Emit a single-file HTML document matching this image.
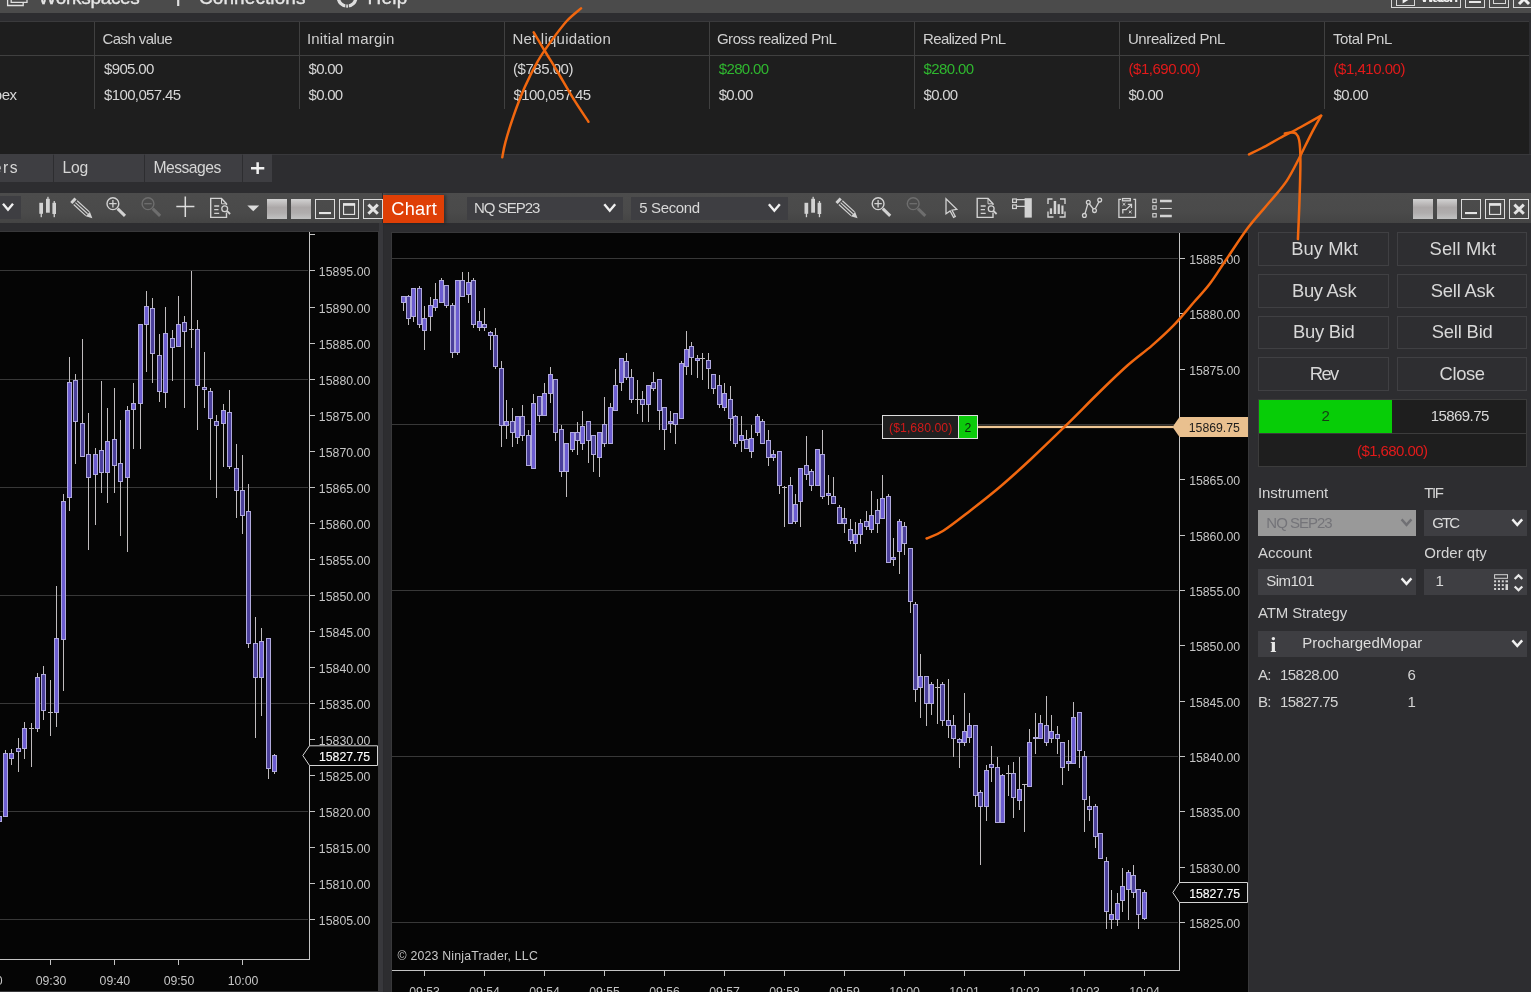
<!DOCTYPE html>
<html><head><meta charset="utf-8"><title>NinjaTrader</title>
<style>
html,body{margin:0;padding:0;background:#2d2d30;}
body{width:1531px;height:992px;position:relative;overflow:hidden;font-family:"Liberation Sans",sans-serif;}
.t{position:absolute;white-space:nowrap;line-height:1;}
.r{position:absolute;}
svg{position:absolute;left:0;top:0;overflow:visible;}
#app{position:absolute;left:0;top:0;width:1531px;height:992px;overflow:hidden;will-change:transform;}
</style></head><body><div id="app">
<div class="r" style="left:0px;top:0px;width:1531px;height:12.5px;background:#4b4b4b;"></div>
<svg width="1531" height="24" viewBox="0 0 1531 24"><g fill="none" stroke="#e0e0e0" stroke-width="1.3"><path d="M7.6 -6V5.5H23.2V2.4"/><path d="M11.2 -6V2.3H27V-6"/><path d="M178.2 -6V6" stroke-width="2.2"/><circle cx="347.1" cy="-2.64" r="8.8" stroke-width="3.3" stroke="#dedede"/><path d="M345.95 3L345.6 9M348.25 3L348.6 9" stroke="#4b4b4b" stroke-width="0.9"/></g></svg>
<div class="t" style="left:38.50px;top:-11.98px;font-size:19.00px;color:#e6e6e6;letter-spacing:-0.319px;-webkit-text-stroke:0.35px #e6e6e6;">Workspaces</div>
<div class="t" style="left:199.00px;top:-11.98px;font-size:19.00px;color:#e6e6e6;letter-spacing:0.080px;-webkit-text-stroke:0.35px #e6e6e6;">Connections</div>
<div class="t" style="left:367.50px;top:-11.98px;font-size:19.00px;color:#e6e6e6;letter-spacing:0.231px;-webkit-text-stroke:0.35px #e6e6e6;">Help</div>
<div class="r" style="left:1391px;top:-10px;width:70px;height:17.5px;border:1px solid #d8d8d8;background:transparent;box-sizing:border-box"></div>
<div class="r" style="left:1396px;top:-10px;width:18.5px;height:15.7px;border:1.5px solid #d8d8d8;background:transparent;box-sizing:border-box"></div>
<div class="t" style="left:1420.50px;top:-10.98px;font-size:15.00px;color:#f0f0f0;letter-spacing:-1.689px;font-weight:bold;">Watch</div>
<div class="r" style="left:1465px;top:-10px;width:19.8px;height:17.5px;border:1px solid #d8d8d8;background:transparent;box-sizing:border-box"></div>
<div class="r" style="left:1469px;top:0.5px;width:12px;height:2px;background:#e8e8e8;"></div>
<div class="r" style="left:1489px;top:-10px;width:19.8px;height:17.5px;border:1px solid #d8d8d8;background:transparent;box-sizing:border-box"></div>
<div class="r" style="left:1493px;top:-10px;width:12.5px;height:13.5px;border:1.3px solid #d8d8d8;background:transparent;box-sizing:border-box"></div>
<div class="r" style="left:1513px;top:-10px;width:20.5px;height:17.5px;border:1px solid #d8d8d8;background:transparent;box-sizing:border-box"></div>
<svg width="1531" height="24" viewBox="0 0 1531 24"><path d="M1519 -6L1529 4M1529 -6L1519 4" stroke="#f0f0f0" stroke-width="3" fill="none"/><path d="M1402.6 3.4L1410.4 -1.2L1402.6 -6Z" fill="#f0f0f0"/></svg>
<div class="r" style="left:0px;top:21px;width:1531px;height:133px;background:#1e1e1e;"></div>
<div class="r" style="left:0px;top:21px;width:1531px;height:1px;background:#3a3a3c;"></div>
<div class="r" style="left:0px;top:154px;width:1531px;height:1px;background:#38383b;"></div>
<div class="r" style="left:0px;top:55px;width:1529px;height:1px;background:#404040;"></div>
<div class="r" style="left:1529px;top:21px;width:2px;height:133px;background:#2d2d30;"></div>
<div class="r" style="left:94px;top:22px;width:1px;height:87px;background:#404040;"></div>
<div class="r" style="left:299px;top:22px;width:1px;height:87px;background:#404040;"></div>
<div class="r" style="left:504px;top:22px;width:1px;height:87px;background:#404040;"></div>
<div class="r" style="left:709px;top:22px;width:1px;height:87px;background:#404040;"></div>
<div class="r" style="left:914px;top:22px;width:1px;height:87px;background:#404040;"></div>
<div class="r" style="left:1119px;top:22px;width:1px;height:87px;background:#404040;"></div>
<div class="r" style="left:1324px;top:22px;width:1px;height:87px;background:#404040;"></div>
<div class="t" style="left:102.40px;top:31.02px;font-size:15.00px;color:#cfcfcf;letter-spacing:-0.545px;">Cash value</div>
<div class="t" style="left:306.90px;top:31.02px;font-size:15.00px;color:#cfcfcf;letter-spacing:0.183px;">Initial margin</div>
<div class="t" style="left:512.40px;top:31.02px;font-size:15.00px;color:#cfcfcf;letter-spacing:0.236px;">Net liquidation</div>
<div class="t" style="left:716.90px;top:31.02px;font-size:15.00px;color:#cfcfcf;letter-spacing:-0.442px;">Gross realized PnL</div>
<div class="t" style="left:922.90px;top:31.02px;font-size:15.00px;color:#cfcfcf;letter-spacing:-0.552px;">Realized PnL</div>
<div class="t" style="left:1127.90px;top:31.02px;font-size:15.00px;color:#cfcfcf;letter-spacing:-0.390px;">Unrealized PnL</div>
<div class="t" style="left:1332.90px;top:31.02px;font-size:15.00px;color:#cfcfcf;letter-spacing:-0.383px;">Total PnL</div>
<div class="t" style="left:104.00px;top:61.02px;font-size:15.00px;color:#d6d6d6;letter-spacing:-0.646px;">$905.00</div>
<div class="t" style="left:308.50px;top:61.02px;font-size:15.00px;color:#d6d6d6;letter-spacing:-0.708px;">$0.00</div>
<div class="t" style="left:513.00px;top:61.02px;font-size:15.00px;color:#d6d6d6;letter-spacing:-0.468px;">($785.00)</div>
<div class="t" style="left:718.80px;top:61.02px;font-size:15.00px;color:#2fb72f;letter-spacing:-0.660px;">$280.00</div>
<div class="t" style="left:923.50px;top:61.02px;font-size:15.00px;color:#2fb72f;letter-spacing:-0.603px;">$280.00</div>
<div class="t" style="left:1128.50px;top:61.02px;font-size:15.00px;color:#e21a1a;letter-spacing:-0.475px;">($1,690.00)</div>
<div class="t" style="left:1333.50px;top:61.02px;font-size:15.00px;color:#e21a1a;letter-spacing:-0.475px;">($1,410.00)</div>
<div class="t" style="left:104.00px;top:87.02px;font-size:15.00px;color:#d6d6d6;letter-spacing:-0.629px;">$100,057.45</div>
<div class="t" style="left:308.50px;top:87.02px;font-size:15.00px;color:#d6d6d6;letter-spacing:-0.708px;">$0.00</div>
<div class="t" style="left:513.50px;top:87.02px;font-size:15.00px;color:#d6d6d6;letter-spacing:-0.583px;">$100,057.45</div>
<div class="t" style="left:718.80px;top:87.02px;font-size:15.00px;color:#d6d6d6;letter-spacing:-0.767px;">$0.00</div>
<div class="t" style="left:923.50px;top:87.02px;font-size:15.00px;color:#d6d6d6;letter-spacing:-0.708px;">$0.00</div>
<div class="t" style="left:1128.50px;top:87.02px;font-size:15.00px;color:#d6d6d6;letter-spacing:-0.608px;">$0.00</div>
<div class="t" style="left:1333.50px;top:87.02px;font-size:15.00px;color:#d6d6d6;letter-spacing:-0.608px;">$0.00</div>
<div class="t" style="left:-6.30px;top:87.02px;font-size:15.00px;color:#d6d6d6;letter-spacing:-0.395px;">pex</div>
<div class="r" style="left:0px;top:154px;width:52.5px;height:28px;background:#3e3e42;"></div>
<div class="r" style="left:54px;top:154px;width:90px;height:28px;background:#3e3e42;"></div>
<div class="r" style="left:145px;top:154px;width:97px;height:28px;background:#3e3e42;"></div>
<div class="r" style="left:243px;top:154px;width:29px;height:28px;background:#3e3e42;"></div>
<div class="t" style="left:-7.20px;top:159.67px;font-size:15.70px;color:#d6d6d6;letter-spacing:1.530px;">ers</div>
<div class="t" style="left:62.60px;top:159.67px;font-size:15.70px;color:#d6d6d6;letter-spacing:-0.332px;">Log</div>
<div class="t" style="left:153.50px;top:159.67px;font-size:15.70px;color:#d6d6d6;letter-spacing:-0.532px;">Messages</div>
<svg width="1531" height="200" viewBox="0 0 1531 200"><path d="M251 168.2H264.3M257.65 162.2V174.1" stroke="#f0f0f0" stroke-width="2.5" fill="none"/></svg>
<div class="r" style="left:0px;top:193.1px;width:382px;height:30.2px;background:linear-gradient(#4c4c4c 0%,#4a4a4a 65%,#444444 100%);"></div>
<div class="r" style="left:378.6px;top:223.3px;width:4.2px;height:800px;background:#38383c;"></div>
<div class="r" style="left:382.7px;top:223.3px;width:0.9px;height:800px;background:#2b2b2e;"></div>
<div class="r" style="left:383px;top:193.1px;width:1148px;height:30.2px;background:linear-gradient(#4c4c4c 0%,#4a4a4a 65%,#444444 100%);"></div>
<div class="r" style="left:0px;top:231px;width:378.6px;height:761px;background:#050505;border:1px solid #38383a;border-left:none;box-sizing:border-box;"></div>
<div class="r" style="left:391px;top:232px;width:858px;height:761px;background:#050505;border:1px solid #38383a;box-sizing:border-box;"></div>
<div class="r" style="left:0px;top:196px;width:21px;height:23px;background:#3e3e42;"></div>
<div class="r" style="left:383px;top:195px;width:61px;height:28px;background:#df3f06;box-shadow:2px 0 3px rgba(0,0,0,0.35);"></div>
<div class="t" style="left:391.30px;top:199.92px;font-size:18.20px;color:#ffffff;letter-spacing:0.239px;">Chart</div>
<div class="r" style="left:467px;top:197.3px;width:156px;height:22.7px;background:#3e3e42;"></div>
<div class="r" style="left:631px;top:197.3px;width:156.5px;height:22.7px;background:#3e3e42;"></div>
<div class="t" style="left:474.00px;top:200.02px;font-size:15.00px;color:#d8d8d8;letter-spacing:-1.009px;">NQ SEP23</div>
<div class="t" style="left:639.30px;top:200.02px;font-size:15.00px;color:#d8d8d8;letter-spacing:-0.361px;">5 Second</div>
<svg width="1531" height="992" viewBox="0 0 1531 992"><path d="M3 203.8L8 209.7L13 203.8" fill="none" stroke="#f0f0f0" stroke-width="2.4" stroke-linecap="butt"/><g transform="translate(0,0)"><g fill="#d2d2d2"><rect x="39.3" y="202.8" width="3.7" height="11"/><rect x="40.6" y="213" width="1.3" height="4.2"/><rect x="46" y="198.8" width="3.8" height="13.9"/><rect x="47.3" y="196.8" width="1.3" height="3"/><rect x="52.4" y="202.8" width="3.6" height="11.2"/><rect x="53.6" y="201" width="1.3" height="16.2"/></g><g transform="translate(73.2,200.6) rotate(42.5)"><rect x="-1.2" y="-3.1" width="3.0" height="6.2" fill="#d2d2d2"/><path d="M3 -2.6H19.5M3 0H19.5M3 2.6H19.5" stroke="#d2d2d2" stroke-width="1.15" fill="none"/><path d="M19.8 -3.1L26 0L19.8 3.1Z" fill="#d2d2d2"/></g><circle cx="112.9" cy="203.7" r="5.9" fill="none" stroke="#d2d2d2" stroke-width="1.4"/><path d="M109.2 203.7H116.6M112.9 200V207.4" stroke="#d2d2d2" stroke-width="1.3"/><path d="M117.6 208.6L125 215.8" stroke="#d2d2d2" stroke-width="3" stroke-linecap="butt"/><circle cx="148" cy="203.7" r="5.9" fill="none" stroke="#6e6e6e" stroke-width="1.4"/><path d="M144.3 203.7H151.7" stroke="#6e6e6e" stroke-width="1.3"/><path d="M152.7 208.6L160.1 215.8" stroke="#6e6e6e" stroke-width="3"/></g><path d="M176.3 206.6H194.4M185.3 196.6V216.9" stroke="#dcdcdc" stroke-width="1.5" fill="none"/><g transform="translate(-766.5,0)" fill="none" stroke="#d2d2d2" stroke-width="1.4"><path d="M993 212.5V217.4H977.2V198.4H988L993 203.8V205"/><path d="M988 198.6V203.8H993" stroke-width="1"/><path d="M980.7 206H985.7M980.7 209.6H985M980.7 213.3H985.7" stroke-width="1.3"/><circle cx="991.2" cy="208.7" r="2.9" stroke-width="1.3"/><path d="M993.4 210.9L996.6 214" stroke-width="1.8"/></g><path d="M247.3 205.6H259.2L253.25 211.3Z" fill="#dcdcdc"/><defs><linearGradient id="gb267" x1="0" y1="0" x2="0" y2="1"><stop offset="0" stop-color="#d2d2d2"/><stop offset="0.42" stop-color="#aca8a8"/><stop offset="0.7" stop-color="#b0adad"/><stop offset="1" stop-color="#c2c2c2"/></linearGradient></defs><rect x="267" y="199" width="20" height="20" fill="url(#gb267)"/><rect x="291" y="199" width="20" height="20" fill="url(#gb267)"/><rect x="315.5" y="199.5" width="19" height="19" fill="none" stroke="#dcdcdc" stroke-width="1"/><rect x="339.5" y="199.5" width="19" height="19" fill="none" stroke="#dcdcdc" stroke-width="1"/><rect x="363.5" y="199.5" width="19" height="19" fill="none" stroke="#dcdcdc" stroke-width="1"/><rect x="319" y="212" width="12" height="2.1" fill="#e4e4e4"/><rect x="343.55" y="204" width="11" height="10.4" fill="none" stroke="#e4e4e4" stroke-width="1.1"/><rect x="343" y="203.2" width="12.1" height="2.6" fill="#e4e4e4"/><path d="M368.4 204.6L377.8 213.8M377.8 204.6L368.4 213.8" stroke="#e2e2e2" stroke-width="3" fill="none"/><path d="M604.3 204.2L609.75 210.7L615.2 204.2" fill="none" stroke="#f0f0f0" stroke-width="2.4" stroke-linecap="butt"/><path d="M768.9 204.2L774.35 210.7L779.8 204.2" fill="none" stroke="#f0f0f0" stroke-width="2.4" stroke-linecap="butt"/><g transform="translate(765.2,0)"><g fill="#d2d2d2"><rect x="39.3" y="202.8" width="3.7" height="11"/><rect x="40.6" y="213" width="1.3" height="4.2"/><rect x="46" y="198.8" width="3.8" height="13.9"/><rect x="47.3" y="196.8" width="1.3" height="3"/><rect x="52.4" y="202.8" width="3.6" height="11.2"/><rect x="53.6" y="201" width="1.3" height="16.2"/></g><g transform="translate(73.2,200.6) rotate(42.5)"><rect x="-1.2" y="-3.1" width="3.0" height="6.2" fill="#d2d2d2"/><path d="M3 -2.6H19.5M3 0H19.5M3 2.6H19.5" stroke="#d2d2d2" stroke-width="1.15" fill="none"/><path d="M19.8 -3.1L26 0L19.8 3.1Z" fill="#d2d2d2"/></g><circle cx="112.9" cy="203.7" r="5.9" fill="none" stroke="#d2d2d2" stroke-width="1.4"/><path d="M109.2 203.7H116.6M112.9 200V207.4" stroke="#d2d2d2" stroke-width="1.3"/><path d="M117.6 208.6L125 215.8" stroke="#d2d2d2" stroke-width="3" stroke-linecap="butt"/><circle cx="148" cy="203.7" r="5.9" fill="none" stroke="#6e6e6e" stroke-width="1.4"/><path d="M144.3 203.7H151.7" stroke="#6e6e6e" stroke-width="1.3"/><path d="M152.7 208.6L160.1 215.8" stroke="#6e6e6e" stroke-width="3"/></g><path d="M946 198.9V213.8L950.1 211L953.6 217.3L955.3 216.5L952 210.2L956.8 209.3Z" fill="none" stroke="#d2d2d2" stroke-width="1.3" stroke-linejoin="miter"/><g transform="translate(0,0)" fill="none" stroke="#d2d2d2" stroke-width="1.4"><path d="M993 212.5V217.4H977.2V198.4H988L993 203.8V205"/><path d="M988 198.6V203.8H993" stroke-width="1"/><path d="M980.7 206H985.7M980.7 209.6H985M980.7 213.3H985.7" stroke-width="1.3"/><circle cx="991.2" cy="208.7" r="2.9" stroke-width="1.3"/><path d="M993.4 210.9L996.6 214" stroke-width="1.8"/></g><rect x="1024.6" y="198.2" width="7.2" height="19.4" fill="#d2d2d2"/><g fill="none" stroke="#d2d2d2" stroke-width="1.2"><rect x="1012.6" y="199" width="3.8" height="3.4"/><rect x="1012.6" y="204.9" width="3.8" height="3.6"/><path d="M1016.4 199.6H1025M1016.4 206.3H1025"/></g><g fill="none" stroke="#d2d2d2" stroke-width="1.4"><path d="M1052.5 199H1048V204M1048 211.5V217H1053.5M1060 199H1065V204M1065 211.5V217H1059.5"/></g><g fill="#d2d2d2"><rect x="1049.8" y="208.3" width="2.3" height="5.7"/><rect x="1053.7" y="201" width="2.5" height="13"/><rect x="1057.6" y="204.2" width="2.3" height="9.8"/><rect x="1061.4" y="205.5" width="2.1" height="8.5"/></g><g fill="none" stroke="#d2d2d2" stroke-width="1.3"><path d="M1085 213.6L1087.7 204.2M1089.4 204L1093.4 209M1095.3 208.8L1098.9 201.9"/><circle cx="1084.4" cy="215.4" r="1.9"/><circle cx="1088.3" cy="202.3" r="1.9"/><circle cx="1094.5" cy="210.6" r="1.9"/><circle cx="1099.7" cy="200.1" r="1.9"/></g><g fill="none" stroke="#d2d2d2" stroke-width="1.3"><path d="M1121 199.4H1118.9V217.3H1135.5V199.4H1133.4"/><rect x="1122.5" y="198.6" width="7.8" height="2.2"/><path d="M1122.6 203L1125.4 205.6M1125.4 203L1122.6 205.6M1128.8 210.6L1131.6 213.2M1131.6 210.6L1128.8 213.2" stroke-width="1"/><path d="M1122.8 213.6V209.6H1126L1131.2 204.6M1127.8 204.3H1131.5V208"/></g><g fill="none" stroke="#d2d2d2" stroke-width="1.1"><rect x="1152.8" y="199.2" width="3.4" height="3.4"/><rect x="1152.8" y="205.8" width="3.4" height="3.4"/><rect x="1152.8" y="213.6" width="3.4" height="3.4"/></g><path d="M1160 201H1171.8M1160 216H1171.8" stroke="#d2d2d2" stroke-width="2.4"/><path d="M1160 208.5H1171.8" stroke="#d2d2d2" stroke-width="1.1"/><defs><linearGradient id="gb1413" x1="0" y1="0" x2="0" y2="1"><stop offset="0" stop-color="#d2d2d2"/><stop offset="0.42" stop-color="#aca8a8"/><stop offset="0.7" stop-color="#b0adad"/><stop offset="1" stop-color="#c2c2c2"/></linearGradient></defs><rect x="1413" y="199" width="20" height="20" fill="url(#gb1413)"/><rect x="1437" y="199" width="20" height="20" fill="url(#gb1413)"/><rect x="1461.5" y="199.5" width="19" height="19" fill="none" stroke="#dcdcdc" stroke-width="1"/><rect x="1485.5" y="199.5" width="19" height="19" fill="none" stroke="#dcdcdc" stroke-width="1"/><rect x="1509.5" y="199.5" width="19" height="19" fill="none" stroke="#dcdcdc" stroke-width="1"/><rect x="1465" y="212" width="12" height="2.1" fill="#e4e4e4"/><rect x="1489.55" y="204" width="11" height="10.4" fill="none" stroke="#e4e4e4" stroke-width="1.1"/><rect x="1489" y="203.2" width="12.1" height="2.6" fill="#e4e4e4"/><path d="M1514.4 204.6L1523.8 213.8M1523.8 204.6L1514.4 213.8" stroke="#e2e2e2" stroke-width="3" fill="none"/></svg>
<div class="r" style="left:1258px;top:232px;width:131px;height:33.5px;border:1px solid #404043;background:#2e2e31;box-sizing:border-box"></div>
<div class="t" style="left:1291.30px;top:240.32px;font-size:18.40px;color:#d8d8d8;letter-spacing:0.035px;">Buy Mkt</div>
<div class="r" style="left:1397px;top:232px;width:130px;height:33.5px;border:1px solid #404043;background:#2e2e31;box-sizing:border-box"></div>
<div class="t" style="left:1429.50px;top:240.32px;font-size:18.40px;color:#d8d8d8;letter-spacing:0.133px;">Sell Mkt</div>
<div class="r" style="left:1258px;top:274px;width:131px;height:33.5px;border:1px solid #404043;background:#2e2e31;box-sizing:border-box"></div>
<div class="t" style="left:1291.90px;top:282.32px;font-size:18.40px;color:#d8d8d8;letter-spacing:-0.268px;">Buy Ask</div>
<div class="r" style="left:1397px;top:274px;width:130px;height:33.5px;border:1px solid #404043;background:#2e2e31;box-sizing:border-box"></div>
<div class="t" style="left:1430.80px;top:282.32px;font-size:18.40px;color:#d8d8d8;letter-spacing:-0.219px;">Sell Ask</div>
<div class="r" style="left:1258px;top:315.5px;width:131px;height:33.5px;border:1px solid #404043;background:#2e2e31;box-sizing:border-box"></div>
<div class="t" style="left:1293.10px;top:323.32px;font-size:18.40px;color:#d8d8d8;letter-spacing:-0.273px;">Buy Bid</div>
<div class="r" style="left:1397px;top:315.5px;width:130px;height:33.5px;border:1px solid #404043;background:#2e2e31;box-sizing:border-box"></div>
<div class="t" style="left:1431.70px;top:323.32px;font-size:18.40px;color:#d8d8d8;letter-spacing:-0.174px;">Sell Bid</div>
<div class="r" style="left:1258px;top:357.3px;width:131px;height:33.5px;border:1px solid #404043;background:#2e2e31;box-sizing:border-box"></div>
<div class="t" style="left:1309.70px;top:365.32px;font-size:18.40px;color:#d8d8d8;letter-spacing:-1.574px;">Rev</div>
<div class="r" style="left:1397px;top:357.3px;width:130px;height:33.5px;border:1px solid #404043;background:#2e2e31;box-sizing:border-box"></div>
<div class="t" style="left:1439.60px;top:365.32px;font-size:18.40px;color:#d8d8d8;letter-spacing:-0.409px;">Close</div>
<div class="r" style="left:1258px;top:399.3px;width:269px;height:68.2px;background:#1e1e1e;border:1px solid #3c3c3c;box-sizing:border-box;"></div>
<div class="r" style="left:1258.5px;top:399.8px;width:133.6px;height:33.6px;background:#07cd07;"></div>
<div class="r" style="left:1258.5px;top:433.2px;width:268px;height:1px;background:#3c3c3c;"></div>
<div class="t" style="left:1321.50px;top:408.02px;font-size:15.00px;color:#153c15;">2</div>
<div class="t" style="left:1430.70px;top:408.02px;font-size:15.00px;color:#d8d8d8;letter-spacing:-0.558px;">15869.75</div>
<div class="t" style="left:1357.00px;top:443.02px;font-size:15.00px;color:#e21a1a;letter-spacing:-0.575px;">($1,680.00)</div>
<div class="t" style="left:1258.00px;top:485.02px;font-size:15.00px;color:#d4d4d4;letter-spacing:-0.086px;">Instrument</div>
<div class="t" style="left:1424.30px;top:485.02px;font-size:15.00px;color:#d4d4d4;letter-spacing:-1.398px;">TIF</div>
<div class="r" style="left:1258px;top:510.4px;width:158px;height:25.2px;background:#999999;"></div>
<div class="t" style="left:1266.30px;top:515.02px;font-size:15.00px;color:#747479;letter-spacing:-0.996px;">NQ SEP23</div>
<div class="r" style="left:1424.3px;top:510.4px;width:103px;height:25.2px;background:#3e3e42;"></div>
<div class="t" style="left:1432.20px;top:515.02px;font-size:15.00px;color:#dcdcdc;letter-spacing:-1.888px;">GTC</div>
<div class="t" style="left:1258.00px;top:545.02px;font-size:15.00px;color:#d4d4d4;letter-spacing:-0.029px;">Account</div>
<div class="t" style="left:1424.30px;top:545.02px;font-size:15.00px;color:#d4d4d4;letter-spacing:-0.002px;">Order qty</div>
<div class="r" style="left:1258px;top:569.4px;width:158px;height:25.2px;background:#3e3e42;"></div>
<div class="t" style="left:1266.30px;top:573.02px;font-size:15.00px;color:#dcdcdc;letter-spacing:-0.527px;">Sim101</div>
<div class="r" style="left:1424.3px;top:569.4px;width:103px;height:25.2px;background:#3e3e42;"></div>
<div class="t" style="left:1435.60px;top:573.02px;font-size:15.00px;color:#dcdcdc;">1</div>
<div class="t" style="left:1258.00px;top:605.02px;font-size:15.00px;color:#d4d4d4;letter-spacing:-0.132px;">ATM Strategy</div>
<div class="r" style="left:1258px;top:631px;width:269.3px;height:25.6px;background:#3e3e42;"></div>
<div class="t" style="left:1270.20px;top:633.52px;font-size:22.00px;color:#e8e8e8;font-weight:bold;font-family:'Liberation Serif',serif;">i</div>
<div class="t" style="left:1302.30px;top:635.02px;font-size:15.00px;color:#dcdcdc;letter-spacing:-0.011px;">ProchargedMopar</div>
<div class="t" style="left:1258.00px;top:667.02px;font-size:15.00px;color:#d4d4d4;letter-spacing:-0.636px;">A:</div>
<div class="t" style="left:1280.00px;top:667.02px;font-size:15.00px;color:#d4d4d4;letter-spacing:-0.546px;">15828.00</div>
<div class="t" style="left:1407.60px;top:667.02px;font-size:15.00px;color:#d4d4d4;">6</div>
<div class="t" style="left:1258.00px;top:694.02px;font-size:15.00px;color:#d4d4d4;letter-spacing:-0.636px;">B:</div>
<div class="t" style="left:1280.00px;top:694.02px;font-size:15.00px;color:#d4d4d4;letter-spacing:-0.596px;">15827.75</div>
<div class="t" style="left:1407.60px;top:694.02px;font-size:15.00px;color:#d4d4d4;">1</div>
<svg width="1531" height="992" viewBox="0 0 1531 992"><path d="M1401.6 519.4L1406.5 524.9L1411.4 519.4" fill="none" stroke="#707074" stroke-width="2.4" stroke-linecap="butt"/><path d="M1512.4 519.4L1517.3 524.9L1522.2 519.4" fill="none" stroke="#f0f0f0" stroke-width="2.4" stroke-linecap="butt"/><path d="M1401.6 578.4L1406.5 583.9L1411.4 578.4" fill="none" stroke="#f0f0f0" stroke-width="2.4" stroke-linecap="butt"/><path d="M1512.4 640.4L1517.3 645.9L1522.2 640.4" fill="none" stroke="#f0f0f0" stroke-width="2.4" stroke-linecap="butt"/><g fill="#d4d4d4"><rect x="1494.6" y="574.7" width="12.9" height="3.6" fill="none" stroke="#d4d4d4" stroke-width="1"/><rect x="1494.1" y="580.3" width="2" height="2"/><rect x="1497.9" y="580.3" width="2.1" height="2"/><rect x="1501.8" y="580.3" width="2" height="2"/><rect x="1505.5" y="580.3" width="2.5" height="2"/><rect x="1494.1" y="584.1" width="2" height="2"/><rect x="1497.9" y="584.1" width="2.1" height="2"/><rect x="1501.8" y="584.1" width="2" height="2"/><rect x="1505.5" y="584.1" width="2.5" height="5.9"/><rect x="1494.1" y="588" width="2" height="2"/><rect x="1497.9" y="588" width="2.1" height="2"/><rect x="1501.8" y="588" width="2" height="2"/></g><path d="M1514.7 579L1518.5 575.3L1522.3 579" fill="none" stroke="#e8e8e8" stroke-width="2.3"/><path d="M1514.7 586.5L1518.5 590.2L1522.3 586.5" fill="none" stroke="#e8e8e8" stroke-width="2.3"/></svg>
<svg width="1531" height="992" viewBox="0 0 1531 992" shape-rendering="crispEdges"><path d="M0 919.5H308" stroke="#383838" stroke-width="1"/><path d="M0 811.5H308" stroke="#383838" stroke-width="1"/><path d="M0 703.5H308" stroke="#383838" stroke-width="1"/><path d="M0 595.5H308" stroke="#383838" stroke-width="1"/><path d="M0 487.5H308" stroke="#383838" stroke-width="1"/><path d="M0 379.5H308" stroke="#383838" stroke-width="1"/><path d="M0 270.5H308" stroke="#383838" stroke-width="1"/><path d="M392 922.5H1178" stroke="#383838" stroke-width="1"/><path d="M392 756.5H1178" stroke="#383838" stroke-width="1"/><path d="M392 590.5H1178" stroke="#383838" stroke-width="1"/><path d="M392 424.5H1178" stroke="#383838" stroke-width="1"/><path d="M392 258.5H1178" stroke="#383838" stroke-width="1"/><path d="M309.5 232V959.5M0 959.5H310" stroke="#c4c4c4" stroke-width="1" fill="none"/><path d="M310 234.5H315" stroke="#c4c4c4" stroke-width="1"/><path d="M310 919.5H315" stroke="#c4c4c4" stroke-width="1"/><path d="M310 883.5H315" stroke="#c4c4c4" stroke-width="1"/><path d="M310 847.5H315" stroke="#c4c4c4" stroke-width="1"/><path d="M310 811.5H315" stroke="#c4c4c4" stroke-width="1"/><path d="M310 775.5H315" stroke="#c4c4c4" stroke-width="1"/><path d="M310 739.5H315" stroke="#c4c4c4" stroke-width="1"/><path d="M310 703.5H315" stroke="#c4c4c4" stroke-width="1"/><path d="M310 667.5H315" stroke="#c4c4c4" stroke-width="1"/><path d="M310 631.5H315" stroke="#c4c4c4" stroke-width="1"/><path d="M310 595.5H315" stroke="#c4c4c4" stroke-width="1"/><path d="M310 559.5H315" stroke="#c4c4c4" stroke-width="1"/><path d="M310 523.5H315" stroke="#c4c4c4" stroke-width="1"/><path d="M310 487.5H315" stroke="#c4c4c4" stroke-width="1"/><path d="M310 451.5H315" stroke="#c4c4c4" stroke-width="1"/><path d="M310 415.5H315" stroke="#c4c4c4" stroke-width="1"/><path d="M310 379.5H315" stroke="#c4c4c4" stroke-width="1"/><path d="M310 343.5H315" stroke="#c4c4c4" stroke-width="1"/><path d="M310 307.5H315" stroke="#c4c4c4" stroke-width="1"/><path d="M310 270.5H315" stroke="#c4c4c4" stroke-width="1"/><path d="M50.5 960V965" stroke="#c4c4c4" stroke-width="1"/><path d="M114.5 960V965" stroke="#c4c4c4" stroke-width="1"/><path d="M178.5 960V965" stroke="#c4c4c4" stroke-width="1"/><path d="M242.5 960V965" stroke="#c4c4c4" stroke-width="1"/><path d="M1179.5 233V970.5M392 970.5H1180" stroke="#c4c4c4" stroke-width="1" fill="none"/><path d="M1180 922.5H1185" stroke="#c4c4c4" stroke-width="1"/><path d="M1180 867.5H1185" stroke="#c4c4c4" stroke-width="1"/><path d="M1180 811.5H1185" stroke="#c4c4c4" stroke-width="1"/><path d="M1180 756.5H1185" stroke="#c4c4c4" stroke-width="1"/><path d="M1180 701.5H1185" stroke="#c4c4c4" stroke-width="1"/><path d="M1180 645.5H1185" stroke="#c4c4c4" stroke-width="1"/><path d="M1180 590.5H1185" stroke="#c4c4c4" stroke-width="1"/><path d="M1180 535.5H1185" stroke="#c4c4c4" stroke-width="1"/><path d="M1180 479.5H1185" stroke="#c4c4c4" stroke-width="1"/><path d="M1180 424.5H1185" stroke="#c4c4c4" stroke-width="1"/><path d="M1180 369.5H1185" stroke="#c4c4c4" stroke-width="1"/><path d="M1180 313.5H1185" stroke="#c4c4c4" stroke-width="1"/><path d="M1180 258.5H1185" stroke="#c4c4c4" stroke-width="1"/><path d="M424.5 971V976" stroke="#c4c4c4" stroke-width="1"/><path d="M484.5 971V976" stroke="#c4c4c4" stroke-width="1"/><path d="M544.5 971V976" stroke="#c4c4c4" stroke-width="1"/><path d="M604.5 971V976" stroke="#c4c4c4" stroke-width="1"/><path d="M664.5 971V976" stroke="#c4c4c4" stroke-width="1"/><path d="M724.5 971V976" stroke="#c4c4c4" stroke-width="1"/><path d="M784.5 971V976" stroke="#c4c4c4" stroke-width="1"/><path d="M844.5 971V976" stroke="#c4c4c4" stroke-width="1"/><path d="M904.5 971V976" stroke="#c4c4c4" stroke-width="1"/><path d="M964.5 971V976" stroke="#c4c4c4" stroke-width="1"/><path d="M1024.5 971V976" stroke="#c4c4c4" stroke-width="1"/><path d="M1084.5 971V976" stroke="#c4c4c4" stroke-width="1"/><path d="M1144.5 971V976" stroke="#c4c4c4" stroke-width="1"/></svg>
<div class="t" style="left:318.80px;top:914.87px;font-size:12.30px;color:#c6c6c6;letter-spacing:0.037px;">15805.00</div>
<div class="t" style="left:318.80px;top:878.87px;font-size:12.30px;color:#c6c6c6;letter-spacing:0.037px;">15810.00</div>
<div class="t" style="left:318.80px;top:842.87px;font-size:12.30px;color:#c6c6c6;letter-spacing:0.037px;">15815.00</div>
<div class="t" style="left:318.80px;top:806.87px;font-size:12.30px;color:#c6c6c6;letter-spacing:0.037px;">15820.00</div>
<div class="t" style="left:318.80px;top:770.87px;font-size:12.30px;color:#c6c6c6;letter-spacing:0.037px;">15825.00</div>
<div class="t" style="left:318.80px;top:734.87px;font-size:12.30px;color:#c6c6c6;letter-spacing:0.037px;">15830.00</div>
<div class="t" style="left:318.80px;top:698.87px;font-size:12.30px;color:#c6c6c6;letter-spacing:0.037px;">15835.00</div>
<div class="t" style="left:318.80px;top:662.87px;font-size:12.30px;color:#c6c6c6;letter-spacing:0.037px;">15840.00</div>
<div class="t" style="left:318.80px;top:626.87px;font-size:12.30px;color:#c6c6c6;letter-spacing:0.037px;">15845.00</div>
<div class="t" style="left:318.80px;top:590.87px;font-size:12.30px;color:#c6c6c6;letter-spacing:0.037px;">15850.00</div>
<div class="t" style="left:318.80px;top:554.87px;font-size:12.30px;color:#c6c6c6;letter-spacing:0.037px;">15855.00</div>
<div class="t" style="left:318.80px;top:518.87px;font-size:12.30px;color:#c6c6c6;letter-spacing:0.037px;">15860.00</div>
<div class="t" style="left:318.80px;top:482.87px;font-size:12.30px;color:#c6c6c6;letter-spacing:0.037px;">15865.00</div>
<div class="t" style="left:318.80px;top:446.87px;font-size:12.30px;color:#c6c6c6;letter-spacing:0.037px;">15870.00</div>
<div class="t" style="left:318.80px;top:410.87px;font-size:12.30px;color:#c6c6c6;letter-spacing:0.037px;">15875.00</div>
<div class="t" style="left:318.80px;top:374.87px;font-size:12.30px;color:#c6c6c6;letter-spacing:0.037px;">15880.00</div>
<div class="t" style="left:318.80px;top:338.87px;font-size:12.30px;color:#c6c6c6;letter-spacing:0.037px;">15885.00</div>
<div class="t" style="left:318.80px;top:302.87px;font-size:12.30px;color:#c6c6c6;letter-spacing:0.037px;">15890.00</div>
<div class="t" style="left:318.80px;top:265.87px;font-size:12.30px;color:#c6c6c6;letter-spacing:0.037px;">15895.00</div>
<div class="t" style="left:1189.20px;top:917.87px;font-size:12.30px;color:#c6c6c6;letter-spacing:-0.038px;">15825.00</div>
<div class="t" style="left:1189.20px;top:862.87px;font-size:12.30px;color:#c6c6c6;letter-spacing:-0.038px;">15830.00</div>
<div class="t" style="left:1189.20px;top:806.87px;font-size:12.30px;color:#c6c6c6;letter-spacing:-0.038px;">15835.00</div>
<div class="t" style="left:1189.20px;top:751.87px;font-size:12.30px;color:#c6c6c6;letter-spacing:-0.038px;">15840.00</div>
<div class="t" style="left:1189.20px;top:696.87px;font-size:12.30px;color:#c6c6c6;letter-spacing:-0.038px;">15845.00</div>
<div class="t" style="left:1189.20px;top:640.87px;font-size:12.30px;color:#c6c6c6;letter-spacing:-0.038px;">15850.00</div>
<div class="t" style="left:1189.20px;top:585.87px;font-size:12.30px;color:#c6c6c6;letter-spacing:-0.038px;">15855.00</div>
<div class="t" style="left:1189.20px;top:530.87px;font-size:12.30px;color:#c6c6c6;letter-spacing:-0.038px;">15860.00</div>
<div class="t" style="left:1189.20px;top:474.87px;font-size:12.30px;color:#c6c6c6;letter-spacing:-0.038px;">15865.00</div>
<div class="t" style="left:1189.20px;top:364.87px;font-size:12.30px;color:#c6c6c6;letter-spacing:-0.038px;">15875.00</div>
<div class="t" style="left:1189.20px;top:308.87px;font-size:12.30px;color:#c6c6c6;letter-spacing:-0.038px;">15880.00</div>
<div class="t" style="left:1189.20px;top:253.87px;font-size:12.30px;color:#c6c6c6;letter-spacing:-0.038px;">15885.00</div>
<div class="t" style="left:35.80px;top:974.87px;font-size:12.30px;color:#c6c6c6;letter-spacing:-0.056px;">09:30</div>
<div class="t" style="left:99.60px;top:974.87px;font-size:12.30px;color:#c6c6c6;letter-spacing:-0.056px;">09:40</div>
<div class="t" style="left:163.70px;top:974.87px;font-size:12.30px;color:#c6c6c6;letter-spacing:-0.056px;">09:50</div>
<div class="t" style="left:227.80px;top:974.87px;font-size:12.30px;color:#c6c6c6;letter-spacing:-0.056px;">10:00</div>
<div class="t" style="left:-4.20px;top:974.87px;font-size:12.30px;color:#c6c6c6;">0</div>
<div class="t" style="left:409.30px;top:985.87px;font-size:12.30px;color:#c6c6c6;letter-spacing:-0.056px;">09:53</div>
<div class="t" style="left:469.30px;top:985.87px;font-size:12.30px;color:#c6c6c6;letter-spacing:-0.056px;">09:54</div>
<div class="t" style="left:529.30px;top:985.87px;font-size:12.30px;color:#c6c6c6;letter-spacing:-0.056px;">09:54</div>
<div class="t" style="left:589.30px;top:985.87px;font-size:12.30px;color:#c6c6c6;letter-spacing:-0.056px;">09:55</div>
<div class="t" style="left:649.30px;top:985.87px;font-size:12.30px;color:#c6c6c6;letter-spacing:-0.056px;">09:56</div>
<div class="t" style="left:709.30px;top:985.87px;font-size:12.30px;color:#c6c6c6;letter-spacing:-0.056px;">09:57</div>
<div class="t" style="left:769.30px;top:985.87px;font-size:12.30px;color:#c6c6c6;letter-spacing:-0.056px;">09:58</div>
<div class="t" style="left:829.30px;top:985.87px;font-size:12.30px;color:#c6c6c6;letter-spacing:-0.056px;">09:59</div>
<div class="t" style="left:889.30px;top:985.87px;font-size:12.30px;color:#c6c6c6;letter-spacing:-0.056px;">10:00</div>
<div class="t" style="left:949.30px;top:985.87px;font-size:12.30px;color:#c6c6c6;letter-spacing:-0.056px;">10:01</div>
<div class="t" style="left:1009.30px;top:985.87px;font-size:12.30px;color:#c6c6c6;letter-spacing:-0.056px;">10:02</div>
<div class="t" style="left:1069.30px;top:985.87px;font-size:12.30px;color:#c6c6c6;letter-spacing:-0.056px;">10:03</div>
<div class="t" style="left:1129.30px;top:985.87px;font-size:12.30px;color:#c6c6c6;letter-spacing:-0.056px;">10:04</div>
<div class="t" style="left:397.50px;top:949.87px;font-size:12.30px;color:#c8c8c8;letter-spacing:0.205px;">© 2023 NinjaTrader, LLC</div>
<svg width="1531" height="992" viewBox="0 0 1531 992" shape-rendering="crispEdges"><path d="M403.5 296V311" stroke="#c0bcbe" stroke-width="1"/><rect x="401.5" y="296.5" width="4" height="6" fill="#6c5dd0" stroke="#b0aadc" stroke-width="1"/><path d="M408.5 295V325" stroke="#c0bcbe" stroke-width="1"/><rect x="406.5" y="296.5" width="4" height="22" fill="#4b409a" stroke="#b0aadc" stroke-width="1"/><path d="M413.5 288V322" stroke="#c0bcbe" stroke-width="1"/><rect x="411.5" y="288.5" width="4" height="28" fill="#6c5dd0" stroke="#b0aadc" stroke-width="1"/><path d="M419.5 286V328" stroke="#c0bcbe" stroke-width="1"/><rect x="417.5" y="288.5" width="4" height="36" fill="#4b409a" stroke="#b0aadc" stroke-width="1"/><path d="M424.5 306V350" stroke="#c0bcbe" stroke-width="1"/><rect x="422.5" y="318.5" width="4" height="12" fill="#6c5dd0" stroke="#b0aadc" stroke-width="1"/><path d="M430.5 297V331" stroke="#c0bcbe" stroke-width="1"/><rect x="428.5" y="305.5" width="4" height="11" fill="#6c5dd0" stroke="#b0aadc" stroke-width="1"/><path d="M435.5 283V311" stroke="#c0bcbe" stroke-width="1"/><rect x="433.5" y="299.5" width="4" height="8" fill="#6c5dd0" stroke="#b0aadc" stroke-width="1"/><path d="M441.5 278V303" stroke="#c0bcbe" stroke-width="1"/><rect x="439.5" y="280.5" width="4" height="22" fill="#6c5dd0" stroke="#b0aadc" stroke-width="1"/><path d="M446.5 285V308" stroke="#c0bcbe" stroke-width="1"/><rect x="444.5" y="285.5" width="4" height="20" fill="#4b409a" stroke="#b0aadc" stroke-width="1"/><path d="M452.5 303V358" stroke="#c0bcbe" stroke-width="1"/><rect x="450.5" y="305.5" width="4" height="47" fill="#4b409a" stroke="#b0aadc" stroke-width="1"/><path d="M457.5 280V355" stroke="#c0bcbe" stroke-width="1"/><rect x="455.5" y="280.5" width="4" height="72" fill="#6c5dd0" stroke="#b0aadc" stroke-width="1"/><path d="M462.5 272V297" stroke="#c0bcbe" stroke-width="1"/><rect x="460.5" y="280.5" width="4" height="16" fill="#4b409a" stroke="#b0aadc" stroke-width="1"/><path d="M468.5 272V303" stroke="#c0bcbe" stroke-width="1"/><rect x="466.5" y="282.5" width="4" height="12" fill="#6c5dd0" stroke="#b0aadc" stroke-width="1"/><path d="M473.5 278V328" stroke="#c0bcbe" stroke-width="1"/><rect x="471.5" y="280.5" width="4" height="44" fill="#4b409a" stroke="#b0aadc" stroke-width="1"/><path d="M479.5 311V331" stroke="#c0bcbe" stroke-width="1"/><rect x="477.5" y="321.5" width="4" height="6" fill="#6c5dd0" stroke="#b0aadc" stroke-width="1"/><path d="M484.5 308V331" stroke="#c0bcbe" stroke-width="1"/><rect x="482.5" y="324.5" width="4" height="3" fill="#4b409a" stroke="#b0aadc" stroke-width="1"/><path d="M490.5 331V350" stroke="#c0bcbe" stroke-width="1"/><rect x="488.5" y="332.5" width="4" height="3" fill="#4b409a" stroke="#b0aadc" stroke-width="1"/><path d="M495.5 328V369" stroke="#c0bcbe" stroke-width="1"/><rect x="493.5" y="335.5" width="4" height="31" fill="#4b409a" stroke="#b0aadc" stroke-width="1"/><path d="M501.5 361V447" stroke="#c0bcbe" stroke-width="1"/><rect x="499.5" y="368.5" width="4" height="57" fill="#4b409a" stroke="#b0aadc" stroke-width="1"/><path d="M506.5 400V439" stroke="#c0bcbe" stroke-width="1"/><rect x="504.5" y="421.5" width="4" height="4" fill="#6c5dd0" stroke="#b0aadc" stroke-width="1"/><path d="M512.5 408V447" stroke="#c0bcbe" stroke-width="1"/><rect x="510.5" y="421.5" width="4" height="11" fill="#4b409a" stroke="#b0aadc" stroke-width="1"/><path d="M517.5 416V444" stroke="#c0bcbe" stroke-width="1"/><rect x="515.5" y="416.5" width="4" height="21" fill="#6c5dd0" stroke="#b0aadc" stroke-width="1"/><path d="M522.5 405V441" stroke="#c0bcbe" stroke-width="1"/><rect x="520.5" y="416.5" width="4" height="19" fill="#4b409a" stroke="#b0aadc" stroke-width="1"/><path d="M528.5 430V466" stroke="#c0bcbe" stroke-width="1"/><rect x="526.5" y="435.5" width="4" height="30" fill="#4b409a" stroke="#b0aadc" stroke-width="1"/><path d="M533.5 394V469" stroke="#c0bcbe" stroke-width="1"/><rect x="531.5" y="403.5" width="4" height="65" fill="#6c5dd0" stroke="#b0aadc" stroke-width="1"/><path d="M539.5 396V422" stroke="#c0bcbe" stroke-width="1"/><rect x="537.5" y="396.5" width="4" height="19" fill="#4b409a" stroke="#b0aadc" stroke-width="1"/><path d="M544.5 383V416" stroke="#c0bcbe" stroke-width="1"/><rect x="542.5" y="393.5" width="4" height="22" fill="#6c5dd0" stroke="#b0aadc" stroke-width="1"/><path d="M550.5 367V403" stroke="#c0bcbe" stroke-width="1"/><rect x="548.5" y="374.5" width="4" height="19" fill="#6c5dd0" stroke="#b0aadc" stroke-width="1"/><path d="M555.5 379V441" stroke="#c0bcbe" stroke-width="1"/><rect x="553.5" y="379.5" width="4" height="53" fill="#4b409a" stroke="#b0aadc" stroke-width="1"/><path d="M561.5 425V477" stroke="#c0bcbe" stroke-width="1"/><rect x="559.5" y="429.5" width="4" height="42" fill="#4b409a" stroke="#b0aadc" stroke-width="1"/><path d="M566.5 443V497" stroke="#c0bcbe" stroke-width="1"/><rect x="564.5" y="443.5" width="4" height="28" fill="#6c5dd0" stroke="#b0aadc" stroke-width="1"/><path d="M572.5 432V452" stroke="#c0bcbe" stroke-width="1"/><rect x="570.5" y="432.5" width="4" height="17" fill="#6c5dd0" stroke="#b0aadc" stroke-width="1"/><path d="M577.5 422V455" stroke="#c0bcbe" stroke-width="1"/><rect x="575.5" y="432.5" width="4" height="8" fill="#4b409a" stroke="#b0aadc" stroke-width="1"/><path d="M582.5 411V450" stroke="#c0bcbe" stroke-width="1"/><rect x="580.5" y="426.5" width="4" height="17" fill="#6c5dd0" stroke="#b0aadc" stroke-width="1"/><path d="M588.5 421V463" stroke="#c0bcbe" stroke-width="1"/><rect x="586.5" y="421.5" width="4" height="19" fill="#4b409a" stroke="#b0aadc" stroke-width="1"/><path d="M593.5 435V472" stroke="#c0bcbe" stroke-width="1"/><rect x="591.5" y="435.5" width="4" height="19" fill="#4b409a" stroke="#b0aadc" stroke-width="1"/><path d="M599.5 432V477" stroke="#c0bcbe" stroke-width="1"/><rect x="597.5" y="432.5" width="4" height="25" fill="#6c5dd0" stroke="#b0aadc" stroke-width="1"/><path d="M604.5 397V447" stroke="#c0bcbe" stroke-width="1"/><rect x="602.5" y="424.5" width="4" height="19" fill="#4b409a" stroke="#b0aadc" stroke-width="1"/><path d="M610.5 403V444" stroke="#c0bcbe" stroke-width="1"/><rect x="608.5" y="407.5" width="4" height="36" fill="#6c5dd0" stroke="#b0aadc" stroke-width="1"/><path d="M615.5 369V411" stroke="#c0bcbe" stroke-width="1"/><rect x="613.5" y="385.5" width="4" height="25" fill="#6c5dd0" stroke="#b0aadc" stroke-width="1"/><path d="M621.5 358V391" stroke="#c0bcbe" stroke-width="1"/><rect x="619.5" y="358.5" width="4" height="24" fill="#6c5dd0" stroke="#b0aadc" stroke-width="1"/><path d="M626.5 353V380" stroke="#c0bcbe" stroke-width="1"/><rect x="624.5" y="361.5" width="4" height="16" fill="#4b409a" stroke="#b0aadc" stroke-width="1"/><path d="M631.5 369V403" stroke="#c0bcbe" stroke-width="1"/><rect x="629.5" y="377.5" width="4" height="22" fill="#4b409a" stroke="#b0aadc" stroke-width="1"/><path d="M637.5 380V414" stroke="#c0bcbe" stroke-width="1"/><path d="M635 399.5H640" stroke="#c0bcbe" stroke-width="1"/><path d="M642.5 391V422" stroke="#c0bcbe" stroke-width="1"/><rect x="640.5" y="399.5" width="4" height="5" fill="#4b409a" stroke="#b0aadc" stroke-width="1"/><path d="M648.5 385V422" stroke="#c0bcbe" stroke-width="1"/><rect x="646.5" y="385.5" width="4" height="19" fill="#6c5dd0" stroke="#b0aadc" stroke-width="1"/><path d="M653.5 372V391" stroke="#c0bcbe" stroke-width="1"/><rect x="651.5" y="382.5" width="4" height="6" fill="#4b409a" stroke="#b0aadc" stroke-width="1"/><path d="M659.5 379V430" stroke="#c0bcbe" stroke-width="1"/><rect x="657.5" y="379.5" width="4" height="31" fill="#4b409a" stroke="#b0aadc" stroke-width="1"/><path d="M664.5 407V450" stroke="#c0bcbe" stroke-width="1"/><rect x="662.5" y="407.5" width="4" height="22" fill="#4b409a" stroke="#b0aadc" stroke-width="1"/><path d="M670.5 411V433" stroke="#c0bcbe" stroke-width="1"/><rect x="668.5" y="421.5" width="4" height="2" fill="#6c5dd0" stroke="#b0aadc" stroke-width="1"/><path d="M675.5 413V444" stroke="#c0bcbe" stroke-width="1"/><rect x="673.5" y="413.5" width="4" height="11" fill="#4b409a" stroke="#b0aadc" stroke-width="1"/><path d="M681.5 361V419" stroke="#c0bcbe" stroke-width="1"/><rect x="679.5" y="363.5" width="4" height="55" fill="#6c5dd0" stroke="#b0aadc" stroke-width="1"/><path d="M686.5 331V375" stroke="#c0bcbe" stroke-width="1"/><rect x="684.5" y="349.5" width="4" height="17" fill="#6c5dd0" stroke="#b0aadc" stroke-width="1"/><path d="M691.5 342V375" stroke="#c0bcbe" stroke-width="1"/><rect x="689.5" y="346.5" width="4" height="11" fill="#4b409a" stroke="#b0aadc" stroke-width="1"/><path d="M697.5 355V378" stroke="#c0bcbe" stroke-width="1"/><rect x="695.5" y="358.5" width="4" height="2" fill="#6c5dd0" stroke="#b0aadc" stroke-width="1"/><path d="M702.5 353V380" stroke="#c0bcbe" stroke-width="1"/><path d="M700 358.5H705" stroke="#c0bcbe" stroke-width="1"/><path d="M708.5 353V389" stroke="#c0bcbe" stroke-width="1"/><rect x="706.5" y="360.5" width="4" height="8" fill="#4b409a" stroke="#b0aadc" stroke-width="1"/><path d="M713.5 374V394" stroke="#c0bcbe" stroke-width="1"/><rect x="711.5" y="374.5" width="4" height="14" fill="#4b409a" stroke="#b0aadc" stroke-width="1"/><path d="M719.5 375V408" stroke="#c0bcbe" stroke-width="1"/><rect x="717.5" y="385.5" width="4" height="19" fill="#4b409a" stroke="#b0aadc" stroke-width="1"/><path d="M724.5 383V411" stroke="#c0bcbe" stroke-width="1"/><rect x="722.5" y="393.5" width="4" height="14" fill="#6c5dd0" stroke="#b0aadc" stroke-width="1"/><path d="M730.5 386V441" stroke="#c0bcbe" stroke-width="1"/><rect x="728.5" y="399.5" width="4" height="19" fill="#4b409a" stroke="#b0aadc" stroke-width="1"/><path d="M735.5 415V447" stroke="#c0bcbe" stroke-width="1"/><rect x="733.5" y="416.5" width="4" height="27" fill="#4b409a" stroke="#b0aadc" stroke-width="1"/><path d="M741.5 416V452" stroke="#c0bcbe" stroke-width="1"/><rect x="739.5" y="435.5" width="4" height="5" fill="#6c5dd0" stroke="#b0aadc" stroke-width="1"/><path d="M746.5 430V449" stroke="#c0bcbe" stroke-width="1"/><rect x="744.5" y="439.5" width="4" height="9" fill="#4b409a" stroke="#b0aadc" stroke-width="1"/><path d="M751.5 425V458" stroke="#c0bcbe" stroke-width="1"/><rect x="749.5" y="438.5" width="4" height="13" fill="#6c5dd0" stroke="#b0aadc" stroke-width="1"/><path d="M757.5 414V436" stroke="#c0bcbe" stroke-width="1"/><rect x="755.5" y="416.5" width="4" height="16" fill="#6c5dd0" stroke="#b0aadc" stroke-width="1"/><path d="M762.5 419V444" stroke="#c0bcbe" stroke-width="1"/><rect x="760.5" y="421.5" width="4" height="22" fill="#4b409a" stroke="#b0aadc" stroke-width="1"/><path d="M768.5 430V466" stroke="#c0bcbe" stroke-width="1"/><rect x="766.5" y="440.5" width="4" height="17" fill="#4b409a" stroke="#b0aadc" stroke-width="1"/><path d="M773.5 450V461" stroke="#c0bcbe" stroke-width="1"/><rect x="771.5" y="454.5" width="4" height="3" fill="#6c5dd0" stroke="#b0aadc" stroke-width="1"/><path d="M779.5 451V494" stroke="#c0bcbe" stroke-width="1"/><rect x="777.5" y="451.5" width="4" height="34" fill="#4b409a" stroke="#b0aadc" stroke-width="1"/><path d="M784.5 486V527" stroke="#c0bcbe" stroke-width="1"/><path d="M782 487.5H787" stroke="#c0bcbe" stroke-width="1"/><path d="M790.5 477V524" stroke="#c0bcbe" stroke-width="1"/><rect x="788.5" y="485.5" width="4" height="38" fill="#4b409a" stroke="#b0aadc" stroke-width="1"/><path d="M795.5 494V524" stroke="#c0bcbe" stroke-width="1"/><rect x="793.5" y="504.5" width="4" height="17" fill="#6c5dd0" stroke="#b0aadc" stroke-width="1"/><path d="M800.5 468V527" stroke="#c0bcbe" stroke-width="1"/><rect x="798.5" y="468.5" width="4" height="33" fill="#6c5dd0" stroke="#b0aadc" stroke-width="1"/><path d="M806.5 436V480" stroke="#c0bcbe" stroke-width="1"/><rect x="804.5" y="465.5" width="4" height="9" fill="#4b409a" stroke="#b0aadc" stroke-width="1"/><path d="M811.5 469V491" stroke="#c0bcbe" stroke-width="1"/><rect x="809.5" y="471.5" width="4" height="14" fill="#4b409a" stroke="#b0aadc" stroke-width="1"/><path d="M817.5 449V486" stroke="#c0bcbe" stroke-width="1"/><rect x="815.5" y="449.5" width="4" height="36" fill="#6c5dd0" stroke="#b0aadc" stroke-width="1"/><path d="M822.5 430V499" stroke="#c0bcbe" stroke-width="1"/><rect x="820.5" y="454.5" width="4" height="42" fill="#4b409a" stroke="#b0aadc" stroke-width="1"/><path d="M828.5 475V505" stroke="#c0bcbe" stroke-width="1"/><rect x="826.5" y="493.5" width="4" height="2" fill="#6c5dd0" stroke="#b0aadc" stroke-width="1"/><path d="M833.5 477V504" stroke="#c0bcbe" stroke-width="1"/><rect x="831.5" y="496.5" width="4" height="7" fill="#4b409a" stroke="#b0aadc" stroke-width="1"/><path d="M839.5 505V524" stroke="#c0bcbe" stroke-width="1"/><rect x="837.5" y="507.5" width="4" height="16" fill="#4b409a" stroke="#b0aadc" stroke-width="1"/><path d="M844.5 508V533" stroke="#c0bcbe" stroke-width="1"/><rect x="842.5" y="518.5" width="4" height="5" fill="#4b409a" stroke="#b0aadc" stroke-width="1"/><path d="M850.5 519V544" stroke="#c0bcbe" stroke-width="1"/><rect x="848.5" y="529.5" width="4" height="11" fill="#4b409a" stroke="#b0aadc" stroke-width="1"/><path d="M855.5 522V552" stroke="#c0bcbe" stroke-width="1"/><rect x="853.5" y="534.5" width="4" height="9" fill="#6c5dd0" stroke="#b0aadc" stroke-width="1"/><path d="M860.5 519V544" stroke="#c0bcbe" stroke-width="1"/><rect x="858.5" y="523.5" width="4" height="11" fill="#6c5dd0" stroke="#b0aadc" stroke-width="1"/><path d="M866.5 511V530" stroke="#c0bcbe" stroke-width="1"/><rect x="864.5" y="521.5" width="4" height="5" fill="#4b409a" stroke="#b0aadc" stroke-width="1"/><path d="M871.5 491V533" stroke="#c0bcbe" stroke-width="1"/><rect x="869.5" y="515.5" width="4" height="14" fill="#6c5dd0" stroke="#b0aadc" stroke-width="1"/><path d="M877.5 499V533" stroke="#c0bcbe" stroke-width="1"/><rect x="875.5" y="510.5" width="4" height="13" fill="#4b409a" stroke="#b0aadc" stroke-width="1"/><path d="M882.5 475V519" stroke="#c0bcbe" stroke-width="1"/><rect x="880.5" y="498.5" width="4" height="20" fill="#6c5dd0" stroke="#b0aadc" stroke-width="1"/><path d="M888.5 494V563" stroke="#c0bcbe" stroke-width="1"/><rect x="886.5" y="496.5" width="4" height="66" fill="#4b409a" stroke="#b0aadc" stroke-width="1"/><path d="M893.5 538V566" stroke="#c0bcbe" stroke-width="1"/><rect x="891.5" y="557.5" width="4" height="2" fill="#6c5dd0" stroke="#b0aadc" stroke-width="1"/><path d="M899.5 519V574" stroke="#c0bcbe" stroke-width="1"/><rect x="897.5" y="521.5" width="4" height="30" fill="#6c5dd0" stroke="#b0aadc" stroke-width="1"/><path d="M904.5 522V555" stroke="#c0bcbe" stroke-width="1"/><rect x="902.5" y="526.5" width="4" height="17" fill="#4b409a" stroke="#b0aadc" stroke-width="1"/><path d="M910.5 548V613" stroke="#c0bcbe" stroke-width="1"/><rect x="908.5" y="548.5" width="4" height="53" fill="#4b409a" stroke="#b0aadc" stroke-width="1"/><path d="M915.5 602V702" stroke="#c0bcbe" stroke-width="1"/><rect x="913.5" y="604.5" width="4" height="85" fill="#4b409a" stroke="#b0aadc" stroke-width="1"/><path d="M920.5 654V718" stroke="#c0bcbe" stroke-width="1"/><rect x="918.5" y="676.5" width="4" height="11" fill="#6c5dd0" stroke="#b0aadc" stroke-width="1"/><path d="M926.5 676V726" stroke="#c0bcbe" stroke-width="1"/><rect x="924.5" y="676.5" width="4" height="27" fill="#4b409a" stroke="#b0aadc" stroke-width="1"/><path d="M931.5 682V715" stroke="#c0bcbe" stroke-width="1"/><rect x="929.5" y="684.5" width="4" height="19" fill="#6c5dd0" stroke="#b0aadc" stroke-width="1"/><path d="M937.5 679V724" stroke="#c0bcbe" stroke-width="1"/><path d="M935 687.5H940" stroke="#c0bcbe" stroke-width="1"/><path d="M942.5 682V726" stroke="#c0bcbe" stroke-width="1"/><rect x="940.5" y="684.5" width="4" height="36" fill="#4b409a" stroke="#b0aadc" stroke-width="1"/><path d="M948.5 679V738" stroke="#c0bcbe" stroke-width="1"/><rect x="946.5" y="720.5" width="4" height="5" fill="#4b409a" stroke="#b0aadc" stroke-width="1"/><path d="M953.5 715V757" stroke="#c0bcbe" stroke-width="1"/><rect x="951.5" y="725.5" width="4" height="13" fill="#4b409a" stroke="#b0aadc" stroke-width="1"/><path d="M959.5 738V768" stroke="#c0bcbe" stroke-width="1"/><rect x="957.5" y="739.5" width="4" height="3" fill="#4b409a" stroke="#b0aadc" stroke-width="1"/><path d="M964.5 693V746" stroke="#c0bcbe" stroke-width="1"/><rect x="962.5" y="731.5" width="4" height="11" fill="#6c5dd0" stroke="#b0aadc" stroke-width="1"/><path d="M969.5 713V743" stroke="#c0bcbe" stroke-width="1"/><rect x="967.5" y="725.5" width="4" height="12" fill="#6c5dd0" stroke="#b0aadc" stroke-width="1"/><path d="M975.5 725V807" stroke="#c0bcbe" stroke-width="1"/><rect x="973.5" y="725.5" width="4" height="70" fill="#4b409a" stroke="#b0aadc" stroke-width="1"/><path d="M980.5 790V865" stroke="#c0bcbe" stroke-width="1"/><rect x="978.5" y="792.5" width="4" height="14" fill="#4b409a" stroke="#b0aadc" stroke-width="1"/><path d="M986.5 765V821" stroke="#c0bcbe" stroke-width="1"/><rect x="984.5" y="770.5" width="4" height="36" fill="#6c5dd0" stroke="#b0aadc" stroke-width="1"/><path d="M991.5 746V782" stroke="#c0bcbe" stroke-width="1"/><rect x="989.5" y="764.5" width="4" height="3" fill="#4b409a" stroke="#b0aadc" stroke-width="1"/><path d="M997.5 757V823" stroke="#c0bcbe" stroke-width="1"/><rect x="995.5" y="767.5" width="4" height="55" fill="#4b409a" stroke="#b0aadc" stroke-width="1"/><path d="M1002.5 774V823" stroke="#c0bcbe" stroke-width="1"/><rect x="1000.5" y="775.5" width="4" height="47" fill="#6c5dd0" stroke="#b0aadc" stroke-width="1"/><path d="M1008.5 765V796" stroke="#c0bcbe" stroke-width="1"/><path d="M1006 773.5H1011" stroke="#c0bcbe" stroke-width="1"/><path d="M1013.5 762V818" stroke="#c0bcbe" stroke-width="1"/><rect x="1011.5" y="773.5" width="4" height="24" fill="#4b409a" stroke="#b0aadc" stroke-width="1"/><path d="M1019.5 757V810" stroke="#c0bcbe" stroke-width="1"/><rect x="1017.5" y="789.5" width="4" height="11" fill="#6c5dd0" stroke="#b0aadc" stroke-width="1"/><path d="M1024.5 784V832" stroke="#c0bcbe" stroke-width="1"/><path d="M1022 784.5H1027" stroke="#c0bcbe" stroke-width="1"/><path d="M1029.5 729V787" stroke="#c0bcbe" stroke-width="1"/><rect x="1027.5" y="742.5" width="4" height="44" fill="#6c5dd0" stroke="#b0aadc" stroke-width="1"/><path d="M1035.5 713V754" stroke="#c0bcbe" stroke-width="1"/><rect x="1033.5" y="737.5" width="4" height="1" fill="#6c5dd0" stroke="#b0aadc" stroke-width="1"/><path d="M1040.5 715V739" stroke="#c0bcbe" stroke-width="1"/><rect x="1038.5" y="723.5" width="4" height="15" fill="#6c5dd0" stroke="#b0aadc" stroke-width="1"/><path d="M1046.5 696V746" stroke="#c0bcbe" stroke-width="1"/><rect x="1044.5" y="725.5" width="4" height="17" fill="#4b409a" stroke="#b0aadc" stroke-width="1"/><path d="M1051.5 715V743" stroke="#c0bcbe" stroke-width="1"/><rect x="1049.5" y="731.5" width="4" height="7" fill="#6c5dd0" stroke="#b0aadc" stroke-width="1"/><path d="M1057.5 726V754" stroke="#c0bcbe" stroke-width="1"/><rect x="1055.5" y="734.5" width="4" height="4" fill="#4b409a" stroke="#b0aadc" stroke-width="1"/><path d="M1062.5 742V785" stroke="#c0bcbe" stroke-width="1"/><rect x="1060.5" y="742.5" width="4" height="25" fill="#4b409a" stroke="#b0aadc" stroke-width="1"/><path d="M1068.5 740V771" stroke="#c0bcbe" stroke-width="1"/><rect x="1066.5" y="761.5" width="4" height="2" fill="#6c5dd0" stroke="#b0aadc" stroke-width="1"/><path d="M1073.5 702V764" stroke="#c0bcbe" stroke-width="1"/><rect x="1071.5" y="717.5" width="4" height="46" fill="#6c5dd0" stroke="#b0aadc" stroke-width="1"/><path d="M1079.5 712V768" stroke="#c0bcbe" stroke-width="1"/><rect x="1077.5" y="712.5" width="4" height="38" fill="#4b409a" stroke="#b0aadc" stroke-width="1"/><path d="M1084.5 751V832" stroke="#c0bcbe" stroke-width="1"/><rect x="1082.5" y="756.5" width="4" height="43" fill="#4b409a" stroke="#b0aadc" stroke-width="1"/><path d="M1089.5 796V821" stroke="#c0bcbe" stroke-width="1"/><rect x="1087.5" y="806.5" width="4" height="3" fill="#4b409a" stroke="#b0aadc" stroke-width="1"/><path d="M1095.5 804V848" stroke="#c0bcbe" stroke-width="1"/><rect x="1093.5" y="806.5" width="4" height="30" fill="#4b409a" stroke="#b0aadc" stroke-width="1"/><path d="M1100.5 833V859" stroke="#c0bcbe" stroke-width="1"/><rect x="1098.5" y="833.5" width="4" height="25" fill="#4b409a" stroke="#b0aadc" stroke-width="1"/><path d="M1106.5 857V929" stroke="#c0bcbe" stroke-width="1"/><rect x="1104.5" y="861.5" width="4" height="50" fill="#4b409a" stroke="#b0aadc" stroke-width="1"/><path d="M1111.5 890V929" stroke="#c0bcbe" stroke-width="1"/><rect x="1109.5" y="914.5" width="4" height="5" fill="#6c5dd0" stroke="#b0aadc" stroke-width="1"/><path d="M1117.5 893V926" stroke="#c0bcbe" stroke-width="1"/><rect x="1115.5" y="903.5" width="4" height="16" fill="#6c5dd0" stroke="#b0aadc" stroke-width="1"/><path d="M1122.5 868V912" stroke="#c0bcbe" stroke-width="1"/><rect x="1120.5" y="886.5" width="4" height="14" fill="#6c5dd0" stroke="#b0aadc" stroke-width="1"/><path d="M1128.5 870V920" stroke="#c0bcbe" stroke-width="1"/><rect x="1126.5" y="872.5" width="4" height="17" fill="#6c5dd0" stroke="#b0aadc" stroke-width="1"/><path d="M1133.5 865V898" stroke="#c0bcbe" stroke-width="1"/><rect x="1131.5" y="875.5" width="4" height="17" fill="#4b409a" stroke="#b0aadc" stroke-width="1"/><path d="M1138.5 889V929" stroke="#c0bcbe" stroke-width="1"/><rect x="1136.5" y="889.5" width="4" height="25" fill="#4b409a" stroke="#b0aadc" stroke-width="1"/><path d="M1144.5 890V920" stroke="#c0bcbe" stroke-width="1"/><rect x="1142.5" y="892.5" width="4" height="26" fill="#6c5dd0" stroke="#b0aadc" stroke-width="1"/></svg>
<svg width="1531" height="992" viewBox="0 0 1531 992" shape-rendering="crispEdges"><path d="M-0.5 816V822" stroke="#c0bcbe" stroke-width="1"/><rect x="-2.5" y="816.5" width="4" height="5" fill="#6c5dd0" stroke="#b0aadc" stroke-width="1"/><path d="M5.5 750V817" stroke="#c0bcbe" stroke-width="1"/><rect x="3.5" y="753.5" width="4" height="63" fill="#6c5dd0" stroke="#b0aadc" stroke-width="1"/><path d="M11.5 749V765" stroke="#c0bcbe" stroke-width="1"/><rect x="9.5" y="753.5" width="4" height="5" fill="#6c5dd0" stroke="#b0aadc" stroke-width="1"/><path d="M18.5 738V772" stroke="#c0bcbe" stroke-width="1"/><rect x="16.5" y="748.5" width="4" height="3" fill="#4b409a" stroke="#b0aadc" stroke-width="1"/><path d="M24.5 722V759" stroke="#c0bcbe" stroke-width="1"/><rect x="22.5" y="728.5" width="4" height="20" fill="#6c5dd0" stroke="#b0aadc" stroke-width="1"/><path d="M31.5 723V767" stroke="#c0bcbe" stroke-width="1"/><path d="M29 728.5H34" stroke="#c0bcbe" stroke-width="1"/><path d="M37.5 673V732" stroke="#c0bcbe" stroke-width="1"/><rect x="35.5" y="677.5" width="4" height="51" fill="#6c5dd0" stroke="#b0aadc" stroke-width="1"/><path d="M43.5 666V720" stroke="#c0bcbe" stroke-width="1"/><rect x="41.5" y="674.5" width="4" height="36" fill="#4b409a" stroke="#b0aadc" stroke-width="1"/><path d="M50.5 680V736" stroke="#c0bcbe" stroke-width="1"/><path d="M48 712.5H53" stroke="#c0bcbe" stroke-width="1"/><path d="M56.5 586V727" stroke="#c0bcbe" stroke-width="1"/><rect x="54.5" y="638.5" width="4" height="74" fill="#6c5dd0" stroke="#b0aadc" stroke-width="1"/><path d="M63.5 494V691" stroke="#c0bcbe" stroke-width="1"/><rect x="61.5" y="501.5" width="4" height="138" fill="#6c5dd0" stroke="#b0aadc" stroke-width="1"/><path d="M69.5 357V511" stroke="#c0bcbe" stroke-width="1"/><rect x="67.5" y="382.5" width="4" height="115" fill="#6c5dd0" stroke="#b0aadc" stroke-width="1"/><path d="M75.5 374V464" stroke="#c0bcbe" stroke-width="1"/><rect x="73.5" y="380.5" width="4" height="41" fill="#4b409a" stroke="#b0aadc" stroke-width="1"/><path d="M82.5 339V457" stroke="#c0bcbe" stroke-width="1"/><rect x="80.5" y="423.5" width="4" height="33" fill="#4b409a" stroke="#b0aadc" stroke-width="1"/><path d="M88.5 413V550" stroke="#c0bcbe" stroke-width="1"/><rect x="86.5" y="454.5" width="4" height="23" fill="#4b409a" stroke="#b0aadc" stroke-width="1"/><path d="M95.5 448V525" stroke="#c0bcbe" stroke-width="1"/><rect x="93.5" y="454.5" width="4" height="20" fill="#6c5dd0" stroke="#b0aadc" stroke-width="1"/><path d="M101.5 381V493" stroke="#c0bcbe" stroke-width="1"/><rect x="99.5" y="450.5" width="4" height="22" fill="#4b409a" stroke="#b0aadc" stroke-width="1"/><path d="M107.5 408V503" stroke="#c0bcbe" stroke-width="1"/><rect x="105.5" y="441.5" width="4" height="31" fill="#6c5dd0" stroke="#b0aadc" stroke-width="1"/><path d="M114.5 388V493" stroke="#c0bcbe" stroke-width="1"/><rect x="112.5" y="439.5" width="4" height="26" fill="#4b409a" stroke="#b0aadc" stroke-width="1"/><path d="M120.5 420V536" stroke="#c0bcbe" stroke-width="1"/><rect x="118.5" y="463.5" width="4" height="18" fill="#4b409a" stroke="#b0aadc" stroke-width="1"/><path d="M127.5 406V552" stroke="#c0bcbe" stroke-width="1"/><rect x="125.5" y="410.5" width="4" height="67" fill="#6c5dd0" stroke="#b0aadc" stroke-width="1"/><path d="M133.5 383V449" stroke="#c0bcbe" stroke-width="1"/><rect x="131.5" y="403.5" width="4" height="6" fill="#6c5dd0" stroke="#b0aadc" stroke-width="1"/><path d="M140.5 324V449" stroke="#c0bcbe" stroke-width="1"/><rect x="138.5" y="324.5" width="4" height="79" fill="#6c5dd0" stroke="#b0aadc" stroke-width="1"/><path d="M146.5 291V372" stroke="#c0bcbe" stroke-width="1"/><rect x="144.5" y="306.5" width="4" height="18" fill="#6c5dd0" stroke="#b0aadc" stroke-width="1"/><path d="M152.5 298V383" stroke="#c0bcbe" stroke-width="1"/><rect x="150.5" y="308.5" width="4" height="45" fill="#4b409a" stroke="#b0aadc" stroke-width="1"/><path d="M159.5 334V402" stroke="#c0bcbe" stroke-width="1"/><rect x="157.5" y="355.5" width="4" height="36" fill="#4b409a" stroke="#b0aadc" stroke-width="1"/><path d="M165.5 307V408" stroke="#c0bcbe" stroke-width="1"/><rect x="163.5" y="333.5" width="4" height="59" fill="#6c5dd0" stroke="#b0aadc" stroke-width="1"/><path d="M172.5 330V381" stroke="#c0bcbe" stroke-width="1"/><rect x="170.5" y="338.5" width="4" height="9" fill="#4b409a" stroke="#b0aadc" stroke-width="1"/><path d="M178.5 296V347" stroke="#c0bcbe" stroke-width="1"/><rect x="176.5" y="324.5" width="4" height="22" fill="#6c5dd0" stroke="#b0aadc" stroke-width="1"/><path d="M184.5 316V408" stroke="#c0bcbe" stroke-width="1"/><rect x="182.5" y="322.5" width="4" height="9" fill="#4b409a" stroke="#b0aadc" stroke-width="1"/><path d="M191.5 271V348" stroke="#c0bcbe" stroke-width="1"/><path d="M189 329.5H194" stroke="#c0bcbe" stroke-width="1"/><path d="M197.5 320V430" stroke="#c0bcbe" stroke-width="1"/><rect x="195.5" y="329.5" width="4" height="56" fill="#4b409a" stroke="#b0aadc" stroke-width="1"/><path d="M204.5 352V408" stroke="#c0bcbe" stroke-width="1"/><rect x="202.5" y="387.5" width="4" height="2" fill="#4b409a" stroke="#b0aadc" stroke-width="1"/><path d="M210.5 388V480" stroke="#c0bcbe" stroke-width="1"/><rect x="208.5" y="391.5" width="4" height="27" fill="#4b409a" stroke="#b0aadc" stroke-width="1"/><path d="M216.5 415V498" stroke="#c0bcbe" stroke-width="1"/><rect x="214.5" y="421.5" width="4" height="4" fill="#4b409a" stroke="#b0aadc" stroke-width="1"/><path d="M223.5 404V467" stroke="#c0bcbe" stroke-width="1"/><rect x="221.5" y="410.5" width="4" height="13" fill="#6c5dd0" stroke="#b0aadc" stroke-width="1"/><path d="M229.5 390V469" stroke="#c0bcbe" stroke-width="1"/><rect x="227.5" y="412.5" width="4" height="54" fill="#4b409a" stroke="#b0aadc" stroke-width="1"/><path d="M236.5 444V518" stroke="#c0bcbe" stroke-width="1"/><rect x="234.5" y="468.5" width="4" height="22" fill="#4b409a" stroke="#b0aadc" stroke-width="1"/><path d="M242.5 455V534" stroke="#c0bcbe" stroke-width="1"/><rect x="240.5" y="490.5" width="4" height="25" fill="#4b409a" stroke="#b0aadc" stroke-width="1"/><path d="M248.5 484V648" stroke="#c0bcbe" stroke-width="1"/><rect x="246.5" y="511.5" width="4" height="132" fill="#4b409a" stroke="#b0aadc" stroke-width="1"/><path d="M255.5 617V738" stroke="#c0bcbe" stroke-width="1"/><rect x="253.5" y="643.5" width="4" height="34" fill="#4b409a" stroke="#b0aadc" stroke-width="1"/><path d="M261.5 628V716" stroke="#c0bcbe" stroke-width="1"/><rect x="259.5" y="641.5" width="4" height="36" fill="#6c5dd0" stroke="#b0aadc" stroke-width="1"/><path d="M268.5 638V779" stroke="#c0bcbe" stroke-width="1"/><rect x="266.5" y="638.5" width="4" height="130" fill="#4b409a" stroke="#b0aadc" stroke-width="1"/><path d="M274.5 754V774" stroke="#c0bcbe" stroke-width="1"/><rect x="272.5" y="755.5" width="4" height="16" fill="#6c5dd0" stroke="#b0aadc" stroke-width="1"/></svg>
<svg width="1531" height="992" viewBox="0 0 1531 992"><rect x="977" y="425.8" width="196" height="2.3" fill="#efc795"/><rect x="882.5" y="415.5" width="95" height="23" fill="#1f1f1f" stroke="#dedede" stroke-width="1"/><rect x="958.5" y="416" width="18.5" height="22" fill="#0ccb0c"/><path d="M958.5 416V438" stroke="#dedede" stroke-width="1"/><path d="M1172.5 427L1179.5 417H1248V437H1179.5Z" fill="#e9c08f"/><path d="M1172.8 892.5L1179.5 882.5H1247.5V902.5H1179.5Z" fill="#050505" stroke="#d4d4d4" stroke-width="1"/><path d="M302.8 755.5L309.5 745.8H377.5V765.5H309.5Z" fill="#050505" stroke="#d4d4d4" stroke-width="1"/></svg>
<div class="t" style="left:889.00px;top:421.87px;font-size:12.30px;color:#d21a1a;letter-spacing:0.044px;">($1,680.00)</div>
<div class="t" style="left:964.40px;top:421.87px;font-size:12.30px;color:#0a240a;">2</div>
<div class="t" style="left:1188.80px;top:421.87px;font-size:12.30px;color:#1c1c1c;letter-spacing:-0.038px;">15869.75</div>
<div class="t" style="left:1189.20px;top:887.87px;font-size:12.30px;color:#ffffff;letter-spacing:-0.038px;-webkit-text-stroke:0.12px #fff;">15827.75</div>
<div class="t" style="left:319.00px;top:750.87px;font-size:12.30px;color:#ffffff;letter-spacing:-0.038px;-webkit-text-stroke:0.12px #fff;">15827.75</div>
<svg width="1531" height="992" viewBox="0 0 1531 992"><g fill="none" stroke="#f1670f" stroke-width="2.5" stroke-linecap="round" stroke-linejoin="round"><path d="M581.0 8.4C578.6 10.5 571.9 15.4 566.8 21.0C561.7 26.6 555.5 35.2 550.6 41.9C545.8 48.6 542.0 53.8 537.7 61.3C533.4 68.8 528.8 78.0 524.8 87.1C520.8 96.2 516.7 107.0 513.5 116.1C510.3 125.2 507.4 135.0 505.5 141.9C503.6 148.8 502.8 154.7 502.3 157.3"/><path d="M533.7 32.3C535.5 35.2 540.3 43.5 544.2 50.0C548.1 56.5 552.3 62.9 557.1 71.0C561.9 79.1 568.0 89.9 573.2 98.4C578.4 106.9 586.0 117.9 588.5 121.8"/><path d="M926.6 538.5C929.4 537.2 936.0 535.4 943.3 530.7C950.6 526.0 960.9 517.8 970.5 510.4C980.1 503.0 990.6 494.8 1000.7 486.2C1010.8 477.6 1020.2 469.1 1031.0 459.0C1041.8 448.9 1054.6 436.5 1065.7 425.7C1076.8 414.9 1087.2 404.1 1097.5 394.0C1107.8 383.9 1118.6 373.4 1127.7 365.3C1136.8 357.2 1144.3 352.2 1151.9 345.6C1159.5 339.0 1166.0 333.2 1173.1 325.9C1180.2 318.6 1188.1 308.9 1194.3 301.8C1200.5 294.8 1204.7 290.7 1210.0 283.6C1215.3 276.5 1220.0 268.7 1226.4 259.3C1232.8 249.9 1241.1 236.8 1248.5 227.0C1255.9 217.2 1264.3 208.5 1270.7 200.8C1277.1 193.1 1282.2 187.7 1286.9 180.6C1291.6 173.5 1295.0 166.2 1299.0 158.5C1303.0 150.8 1307.3 141.4 1311.0 134.3C1314.7 127.2 1319.4 118.8 1321.1 115.7"/><path d="M1321.1 115.7C1317.6 117.7 1306.8 123.8 1300.0 127.5C1293.2 131.2 1286.3 134.6 1280.0 138.0C1273.7 141.4 1267.2 145.3 1262.0 148.0C1256.8 150.7 1251.2 153.3 1249.0 154.4"/><path d="M1284.8 133.6C1285.8 133.4 1289.2 132.4 1291.0 132.4C1292.8 132.4 1294.5 132.2 1295.9 133.5C1297.3 134.8 1298.5 135.8 1299.2 140.3C1300.0 144.8 1300.4 150.6 1300.4 160.5C1300.5 170.4 1299.9 186.9 1299.5 200.0C1299.1 213.1 1298.2 232.6 1297.9 239.1"/></g></svg>
</div></body></html>
